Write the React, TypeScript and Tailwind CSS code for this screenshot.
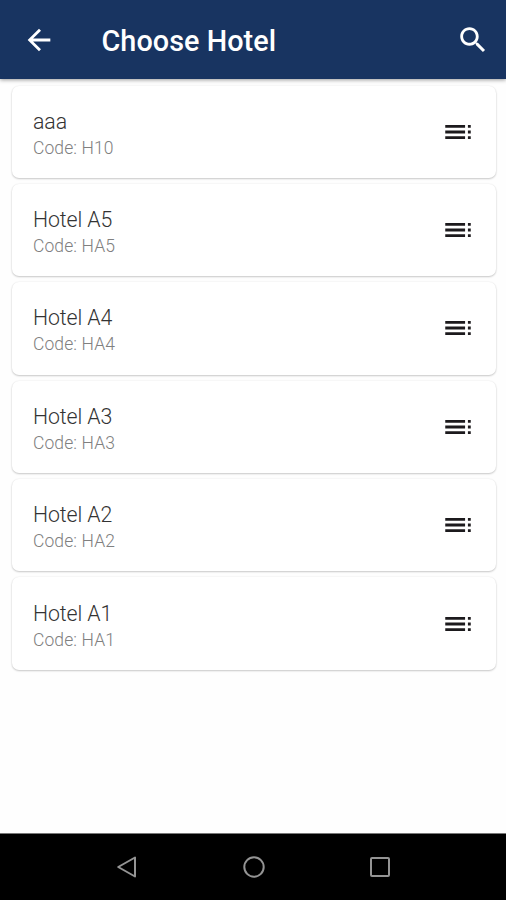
type Hotel = { name: string; code: string }

const hotels: Hotel[] = [
  { name: 'aaa', code: 'H10' },
  { name: 'Hotel A5', code: 'HA5' },
  { name: 'Hotel A4', code: 'HA4' },
  { name: 'Hotel A3', code: 'HA3' },
  { name: 'Hotel A2', code: 'HA2' },
  { name: 'Hotel A1', code: 'HA1' },
]

function Icon({ d, className = '' }: { d: string; className?: string }) {
  return (
    <svg viewBox="0 0 24 24" fill="currentColor" className={`w-[34px] h-[34px] shrink-0 ${className}`}>
      <path d={d} />
    </svg>
  )
}

const BACK = 'M20 11H7.83l5.59-5.59L12 4l-8 8 8 8 1.41-1.41L7.83 13H20v-2z'
const SEARCH =
  'M15.5 14h-.79l-.28-.27C15.41 12.59 16 11.11 16 9.5 16 5.91 13.09 3 9.5 3S3 5.91 3 9.5 5.91 16 9.5 16c1.61 0 3.09-.59 4.23-1.57l.27.28v.79l5 4.99L20.49 19l-4.99-5zm-6 0C7.01 14 5 11.99 5 9.5S7.01 5 9.5 5 14 7.01 14 9.5 11.99 14 9.5 14z'
const TOC =
  'M3 9h14V7H3v2zm0 4h14v-2H3v2zm0 4h14v-2H3v2zm16 0h2v-2h-2v2zm0-10v2h2V7h-2zm0 6h2v-2h-2v2z'

function HotelCard({ hotel }: { hotel: Hotel }) {
  return (
    <li className="h-[92.4px] flex items-center justify-between rounded-[7px] bg-white pl-[21px] pr-[21px] shadow-[0_1px_2px_rgba(0,0,0,0.2),0_0_2px_rgba(0,0,0,0.08)]">
      <div className="pt-[6px]">
        <div className="text-[21.3px] leading-[26px] font-light tracking-[-0.1px] text-[#333]">{hotel.name}</div>
        <div className="text-[17.5px] leading-[26px] font-light tracking-[0.1px] text-[#808080]">Code: {hotel.code}</div>
      </div>
      <Icon d={TOC} className="text-[#1c1a1d]" />
    </li>
  )
}

export default function App() {
  return (
    <div className="w-[506px] h-[900px] flex flex-col overflow-hidden bg-[#fefefe] font-['Roboto','Liberation_Sans',sans-serif]">
      {/* Toolbar */}
      <header className="relative z-10 h-[79px] shrink-0 flex items-center bg-[#183461] pl-[22px] pr-[16.5px] text-white shadow-[0_1px_4px_rgba(0,0,0,0.4)]">
        <Icon d={BACK} />
        <h1 className="ml-[45.5px] mt-[3px] flex-1 text-[28.8px] leading-[34px] font-medium tracking-[0.05px]">Choose Hotel</h1>
        <Icon d={SEARCH} />
      </header>

      {/* Hotel list */}
      <main className="flex-1 pl-[12px] pr-[10.5px] pt-[6.5px]">
        <ul className="flex flex-col gap-[6px]">
          {hotels.map((hotel) => (
            <HotelCard key={hotel.code} hotel={hotel} />
          ))}
        </ul>
      </main>

      {/* System navigation */}
      <nav className="h-[67px] shrink-0 flex items-center justify-center gap-[102.5px] bg-black border-t border-[#777] pl-[1px] text-[#949494]">
        <svg viewBox="0 0 24 24" fill="none" stroke="currentColor" strokeWidth="2" strokeLinejoin="round" className="w-6 h-6">
          <path d="M20 2.5v19L3.2 12z" />
        </svg>
        <svg viewBox="0 0 24 24" fill="none" stroke="currentColor" strokeWidth="2" className="w-6 h-6">
          <circle cx="12" cy="12" r="9.7" />
        </svg>
        <svg viewBox="0 0 24 24" fill="none" stroke="currentColor" strokeWidth="2" className="w-6 h-6">
          <rect x="3" y="3" width="18" height="18" rx="1" />
        </svg>
      </nav>
    </div>
  )
}
